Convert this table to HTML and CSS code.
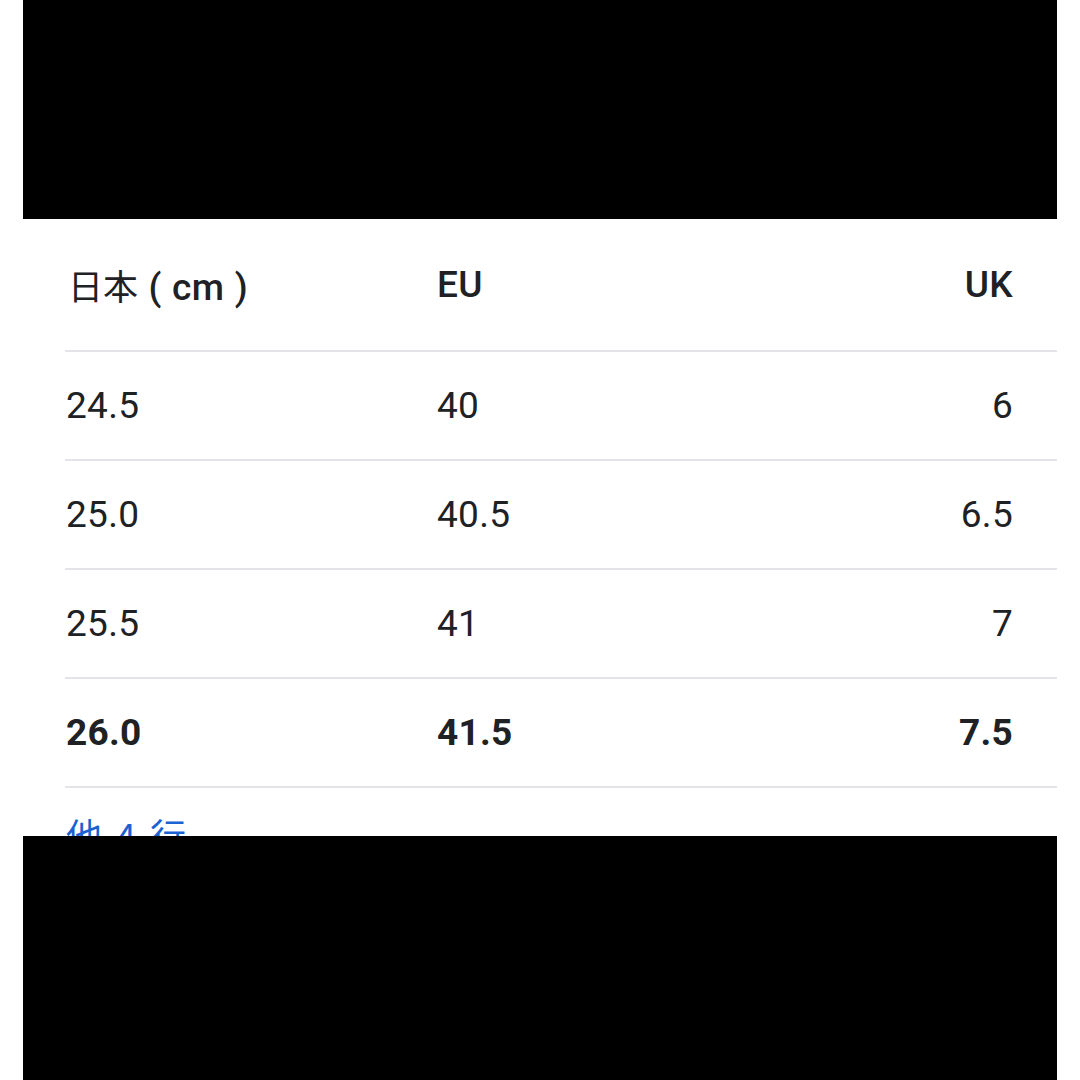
FILE: index.html
```html
<!DOCTYPE html>
<html lang="ja">
<head>
<meta charset="utf-8">
<link rel="stylesheet" href="styles.css">
</head>
<body>
<div class="frame">
  <div class="mask mask-top"></div>
  <div class="content">
    <div class="table">
      <div class="row head">
        <div class="c1"><span class="jp">日本</span> ( cm )</div>
        <div class="c2">EU</div>
        <div class="c3">UK</div>
      </div>
      <div class="row">
        <div class="c1">24.5</div>
        <div class="c2">40</div>
        <div class="c3">6</div>
      </div>
      <div class="row">
        <div class="c1">25.0</div>
        <div class="c2">40.5</div>
        <div class="c3">6.5</div>
      </div>
      <div class="row">
        <div class="c1">25.5</div>
        <div class="c2">41</div>
        <div class="c3">7</div>
      </div>
      <div class="row strong">
        <div class="c1">26.0</div>
        <div class="c2">41.5</div>
        <div class="c3">7.5</div>
      </div>
    </div>
    <a class="more" href="#">他 4 行</a>
  </div>
  <div class="mask mask-bottom"></div>
</div>
</body>
</html>
```

FILE: styles.css
```css
html, body {
  margin: 0;
  padding: 0;
  background: #ffffff;
}
body {
  width: 1080px;
  height: 1080px;
  overflow: hidden;
  font-family: "Roboto", "Noto Sans CJK JP", sans-serif;
  color: #202124;
}
.frame {
  display: flex;
  flex-direction: column;
  height: 1080px;
}
.mask {
  background: #000000;
  margin: 0 23px;
}
.mask-top {
  height: 219px;
}
.mask-bottom {
  flex: 1;
}
.content {
  height: 617px;
  overflow: hidden;
  padding-left: 65px;
  margin-right: 23px;
}
.row {
  display: grid;
  grid-template-columns: 371px 1fr auto;
  align-items: center;
  height: 107px;
  border-bottom: 2px solid #e3e4e7;
  padding-right: 44px;
  padding-left: 1px;
  font-size: 37px;
  font-weight: 400;
  letter-spacing: 0.3px;
}
.row.head {
  height: 131px;
  font-weight: 500;
}
.row.head .c1 {
  word-spacing: 1px;
  padding-left: 2px;
}
.row.head .jp {
  font-family: "Noto Sans CJK JP", sans-serif;
  font-size: 35px;
  font-weight: 400;
  letter-spacing: 0;
}
.row.strong {
  font-weight: 700;
}
.c3 {
  text-align: right;
}
.more {
  display: block;
  margin-top: 28px;
  padding-left: 1px;
  font-family: "Noto Sans CJK JP", sans-serif;
  font-size: 36px;
  line-height: 1;
  word-spacing: 6px;
  color: #1a62d4;
  text-decoration: none;
}
```
